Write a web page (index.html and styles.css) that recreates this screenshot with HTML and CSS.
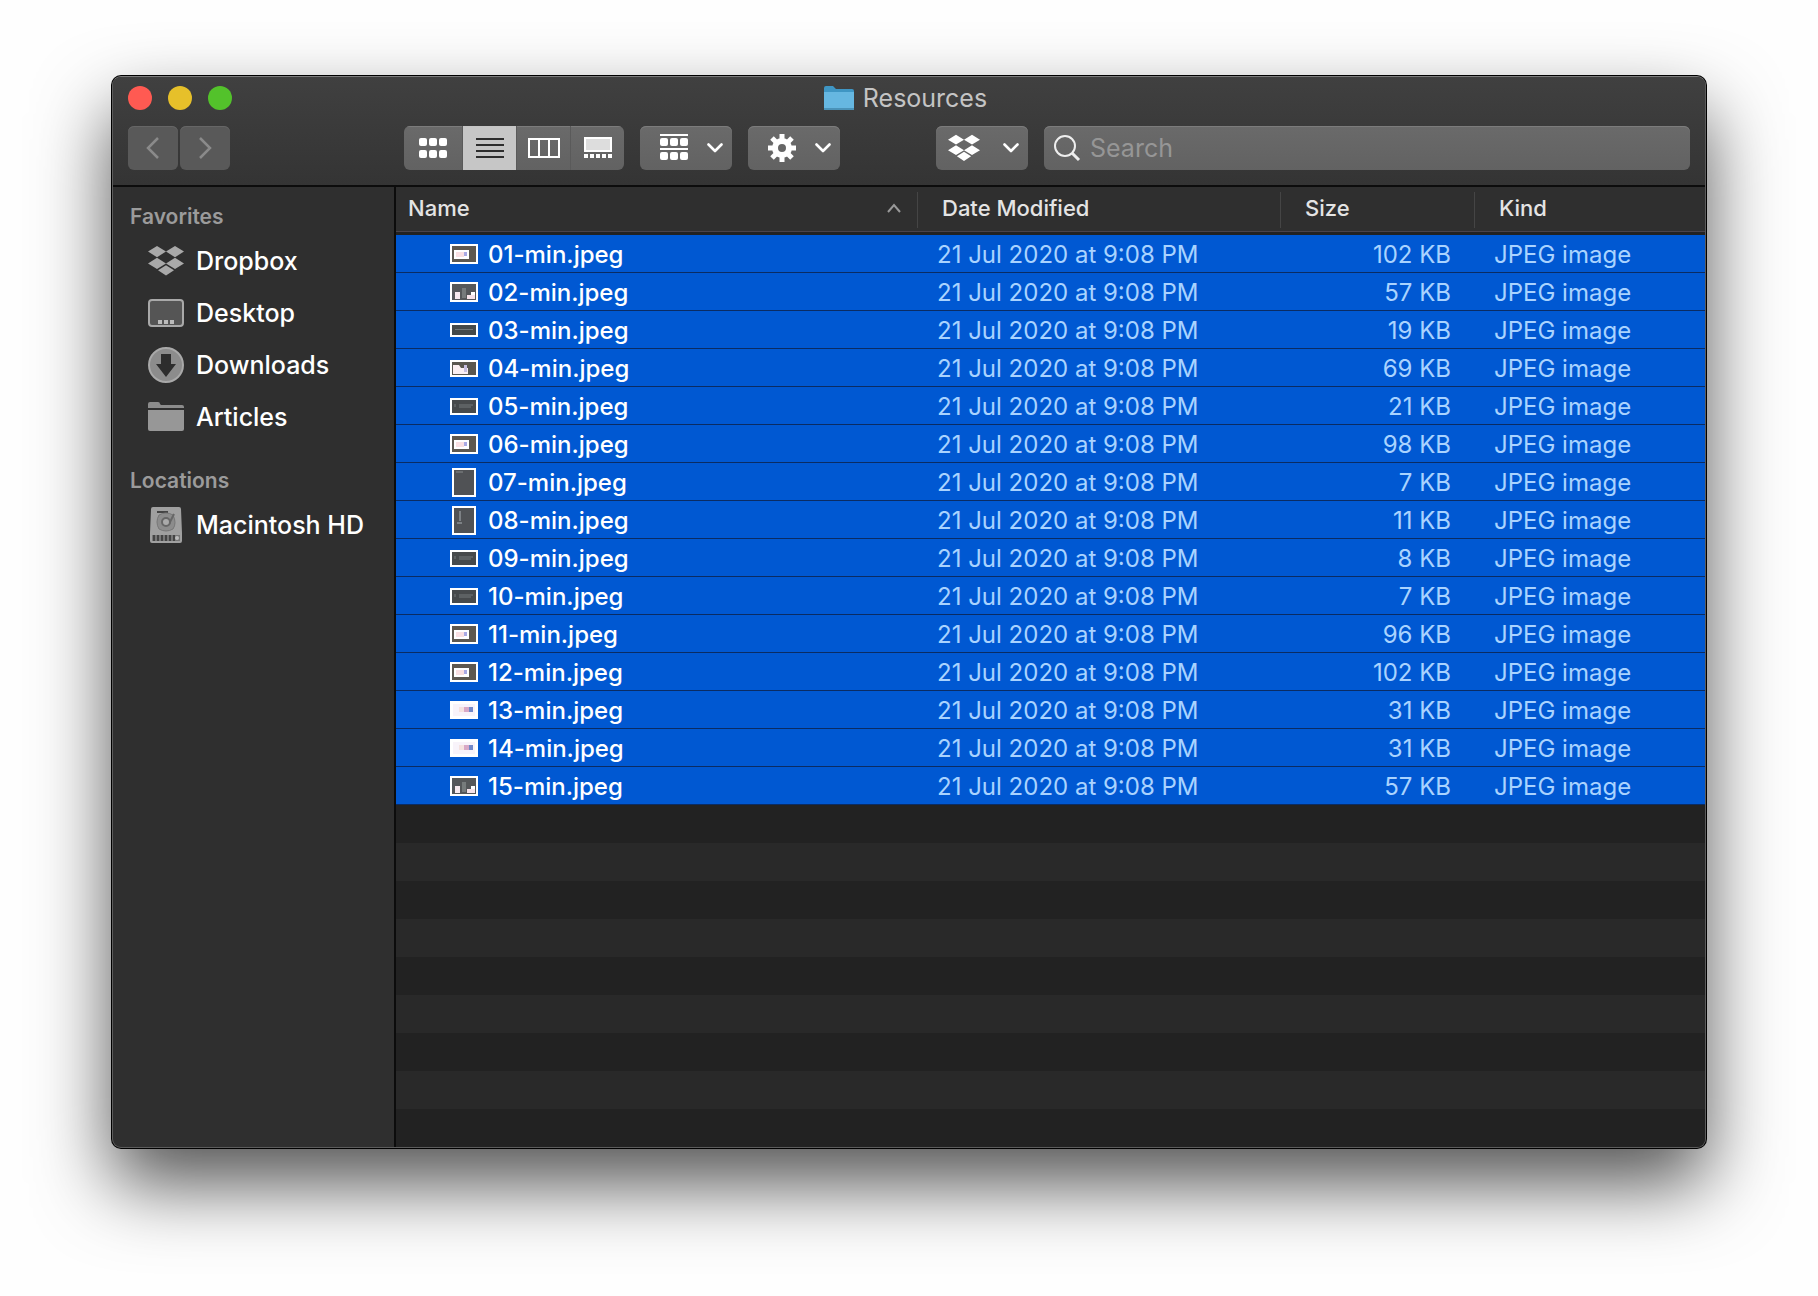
FILE: index.html
```html
<!DOCTYPE html>
<html lang="en">
<head>
    <meta charset="UTF-8">
    <meta name="viewport" content="width=device-width, initial-scale=1.0">
    <title>Resources</title>
    <link rel="stylesheet" href="styles.css">
</head>
<body>
    <!-- shared icons -->
    <svg class="sprite" aria-hidden="true">
        <symbol id="dropbox" viewBox="0 0 36 30">
            <path d="M9 0l9 5.6-9 5.6-9-5.6zM27 0l9 5.6-9 5.6-9-5.6zM9 11.8l9 5.6-9 5.6-9-5.6zM27 11.8l9 5.6-9 5.6-9-5.6zM18 19.2l8 5-8 5.4-8-5.4z"/>
        </symbol>
        <symbol id="chevron" viewBox="0 0 16 10">
            <path d="M1.5 1.5L8 8l6.500-6.500" fill="none" stroke="currentColor" stroke-width="2.600" stroke-linecap="round" stroke-linejoin="round"/>
        </symbol>
        <symbol id="thumb-window" viewBox="0 0 28 20">
            <rect width="28" height="20" fill="#fff"/>
            <rect x="2" y="2" width="24" height="16" fill="#5d5850"/>
            <rect x="4" y="6" width="15" height="9" fill="#fff"/>
            <rect x="6" y="8" width="8" height="5" fill="#f9dfe2"/>
            <rect x="14" y="8" width="3" height="4" fill="#a9a9e4"/>
        </symbol>
        <symbol id="thumb-people" viewBox="0 0 28 20">
            <rect width="28" height="20" fill="#fff"/>
            <rect x="2" y="2" width="24" height="16" fill="#55575a"/>
            <rect x="5" y="10" width="5" height="7" fill="#f7e9ee"/>
            <rect x="17" y="13" width="8" height="4" fill="#f7e3ea"/>
            <rect x="21" y="10" width="4" height="3" fill="#fff"/>
            <rect x="12" y="6" width="4" height="10" fill="#777b7c"/>
        </symbol>
        <symbol id="thumb-bar" viewBox="0 0 28 14">
            <rect width="28" height="14" fill="#fff"/>
            <rect x="2" y="2" width="24" height="10" fill="#44494a"/>
            <rect x="5" y="6" width="18" height="1" fill="#6f7577"/>
        </symbol>
        <symbol id="thumb-photo" viewBox="0 0 28 17">
            <rect width="28" height="17" fill="#fff"/>
            <rect x="2" y="2" width="24" height="13" fill="#5a5750"/>
            <path d="M3 5h6l2 3h7v6H3z" fill="#fbeff2"/>
            <rect x="14" y="5" width="3" height="7" fill="#c8bfe0"/>
        </symbol>
        <symbol id="thumb-dark" viewBox="0 0 28 17">
            <rect width="28" height="17" fill="#fff"/>
            <rect x="2" y="2" width="24" height="13" fill="#474a4c"/>
            <path d="M5 6v3M9 7h14M9 9h12" stroke="#74787a"/>
        </symbol>
        <symbol id="thumb-tall" viewBox="0 0 24 29">
            <rect width="24" height="29" fill="#fff"/>
            <rect x="2" y="2" width="20" height="25" fill="#505255"/>
            <path d="M4 4h7" stroke="#85898b"/>
        </symbol>
        <symbol id="thumb-list" viewBox="0 0 24 29">
            <rect width="24" height="29" fill="#fff"/>
            <rect x="2" y="2" width="20" height="25" fill="#505255"/>
            <path d="M8 5v10M5 17h5" stroke="#a9b0b5"/>
        </symbol>
        <symbol id="thumb-light" viewBox="0 0 28 18">
            <rect width="28" height="18" fill="#fff"/>
            <rect x="3" y="3" width="22" height="12" fill="#f8f3fa"/>
            <rect x="9" y="6" width="6" height="5" fill="#f5e2e0"/>
            <rect x="14" y="6" width="5" height="5" fill="#d8a8c6"/>
            <rect x="19" y="6" width="4" height="5" fill="#7288c8"/>
        </symbol>
    </svg>

    <main class="window">
        <header class="toolbar">
            <div class="titlebar">
                <div class="lights">
                    <button class="light light-close" aria-label="Close"></button>
                    <button class="light light-minimize" aria-label="Minimize"></button>
                    <button class="light light-zoom" aria-label="Zoom"></button>
                </div>
                <h1 class="title">
                    <svg width="32" height="26" viewBox="0 0 32 26">
                        <path d="M1 3q0-2 2-2h7l3 3h16q2 0 2 2v17q0 1-1 1H2q-1 0-1-1z" fill="#3f96c4"/>
                        <path d="M1 7h30v16q0 2-1 2H2q-1 0-1-2z" fill="#66b7e1"/>
                        <path d="M1 24h30" stroke="#4a92b8" stroke-width="2"/>
                    </svg>
                    Resources
                </h1>
            </div>

            <div class="controls">
                <div class="nav">
                    <button class="btn btn-nav" aria-label="Back">
                        <svg width="14" height="24" viewBox="0 0 14 24"><path d="M12 2L2 12l10 10" fill="none" stroke="currentColor" stroke-width="2.500"/></svg>
                    </button>
                    <button class="btn btn-nav" aria-label="Forward">
                        <svg width="14" height="24" viewBox="0 0 14 24"><path d="M2 2l10 10L2 22" fill="none" stroke="currentColor" stroke-width="2.500"/></svg>
                    </button>
                </div>

                <div class="views">
                    <button class="btn view" aria-label="Icons">
                        <svg width="28" height="20" viewBox="0 0 28 20" fill="#fff">
                            <rect width="8" height="8" rx="2"/><rect x="10" width="8" height="8" rx="2"/><rect x="20" width="8" height="8" rx="2"/>
                            <rect y="12" width="8" height="8" rx="2"/><rect x="10" y="12" width="8" height="8" rx="2"/><rect x="20" y="12" width="8" height="8" rx="2"/>
                        </svg>
                    </button>
                    <button class="btn view view-active" aria-label="List">
                        <svg width="30" height="20" viewBox="0 0 30 20"><path d="M1 1h28M1 7h28M1 13h28M1 19h28" stroke="#2d2d2d" stroke-width="2"/></svg>
                    </button>
                    <button class="btn view" aria-label="Columns">
                        <svg width="32" height="20" viewBox="0 0 32 20"><path d="M1 1h30v18H1zM11 1v18M21 1v18" fill="none" stroke="#fff" stroke-width="2"/></svg>
                    </button>
                    <button class="btn view" aria-label="Gallery">
                        <svg width="28" height="22" viewBox="0 0 28 22">
                            <rect x="1" y="1" width="26" height="13" fill="#ddd" stroke="#fff" stroke-width="2"/>
                            <path d="M0 19h28" stroke="#fff" stroke-width="4" stroke-dasharray="4 2"/>
                        </svg>
                    </button>
                </div>

                <button class="btn btn-menu" aria-label="Group items">
                    <svg width="28" height="28" viewBox="0 0 28 28" fill="#fff">
                        <rect width="28" height="2"/><rect y="14" width="28" height="2"/>
                        <rect y="4" width="8" height="8" rx="2"/><rect x="10" y="4" width="8" height="8" rx="2"/><rect x="20" y="4" width="8" height="8" rx="2"/>
                        <rect y="18" width="8" height="8" rx="2"/><rect x="10" y="18" width="8" height="8" rx="2"/><rect x="20" y="18" width="8" height="8" rx="2"/>
                    </svg>
                    <svg width="16" height="10"><use href="#chevron"/></svg>
                </button>
                <button class="btn btn-menu" aria-label="Actions">
                    <svg width="28" height="28" viewBox="-14 -14 28 28">
                        <path d="M0-14V14M-14 0H14M-10-10L10 10M10-10L-10 10" stroke="#fff" stroke-width="5"/>
                        <circle r="7" fill="#666" stroke="#fff" stroke-width="6"/>
                        <circle r="3" fill="#666"/>
                    </svg>
                    <svg width="16" height="10"><use href="#chevron"/></svg>
                </button>
                <button class="btn btn-menu btn-dropbox" aria-label="Dropbox">
                    <svg width="32" height="28" fill="#fff"><use href="#dropbox"/></svg>
                    <svg width="16" height="10"><use href="#chevron"/></svg>
                </button>

                <label class="search">
                    <svg width="28" height="28" viewBox="0 0 28 28"><circle cx="11" cy="12" r="10" fill="none" stroke="#eee" stroke-width="2"/><path d="M18 19l7 7" stroke="#eee" stroke-width="3"/></svg>
                    <input type="text" placeholder="Search" aria-label="Search">
                </label>
            </div>
        </header>

        <div class="content">
            <nav class="sidebar">
                <h2>Favorites</h2>
                <a href="#">
                    <svg width="36" height="30" fill="#a9a9a9"><use href="#dropbox"/></svg>
                    Dropbox
                </a>
                <a href="#">
                    <svg width="36" height="28" viewBox="0 0 36 28">
                        <rect x="1" y="1" width="34" height="26" rx="3" fill="#555" stroke="#a9a9a9" stroke-width="2"/>
                        <path d="M10 23h4M16 23h4M22 23h4" stroke="#bbb" stroke-width="4"/>
                    </svg>
                    Desktop
                </a>
                <a href="#">
                    <svg width="36" height="36" viewBox="0 0 36 36">
                        <circle cx="18" cy="18" r="17" fill="#8c8c8c" stroke="#a9a9a9" stroke-width="2"/>
                        <path d="M13 7h10v10h5L18 30 8 17h5z" fill="#2d2d2d"/>
                    </svg>
                    Downloads
                </a>
                <a href="#">
                    <svg width="36" height="30" viewBox="0 0 36 30">
                        <path d="M0 6V2q0-2 2-2h8q2 0 2 2l1 1h21q2 0 2 2v1z" fill="#8c8c8c"/>
                        <path d="M0 8h36v19q0 2-2 2H2q-2 0-2-2z" fill="#979797"/>
                    </svg>
                    Articles
                </a>
                <h2>Locations</h2>
                <a href="#">
                    <svg width="36" height="36" viewBox="0 0 36 36">
                        <path d="M5 0h26q2 0 2 2l1 24v8q0 2-2 2H4q-2 0-2-2v-8L3 2q0-2 2-2z" fill="#a0a0a0"/>
                        <path d="M9 5h11" stroke="#444" stroke-width="2"/>
                        <path d="M11 8q7-4 14 0 4 8 0 14-7 4-14 0-4-7 0-14z" fill="#8c8c8c" stroke="#777"/>
                        <path d="M26 7L21 17" stroke="#666" stroke-width="2"/>
                        <circle cx="18" cy="15" r="4" fill="#aaa" stroke="#666" stroke-width="2"/>
                        <rect x="4" y="28" width="28" height="6" fill="#777"/>
                        <path d="M6 28v6M10 28v6M14 28v6M18 28v6M22 28v6M26 28v6" stroke="#444" stroke-width="2"/>
                        <circle cx="29" cy="31" r="2" fill="#bbb"/>
                    </svg>
                    Macintosh HD
                </a>
            </nav>

            <div class="list">
                <table>
                    <thead>
                        <tr>
                            <th class="col-name" aria-sort="ascending"><div>Name <svg width="14" height="10" viewBox="0 0 14 10"><path d="M1 9l6-7 6 7" fill="none" stroke="#999" stroke-width="2"/></svg></div></th>
                            <th class="col-date"><div>Date Modified</div></th>
                            <th class="col-size"><div>Size</div></th>
                            <th class="col-kind"><div>Kind</div></th>
                        </tr>
                    </thead>
                    <tbody>
                        <tr><td class="name"><svg width="28" height="20"><use href="#thumb-window"/></svg>01-min.jpeg</td><td class="date">21 Jul 2020 at 9:08 PM</td><td class="size">102 KB</td><td>JPEG image</td></tr>
                        <tr><td class="name"><svg width="28" height="20"><use href="#thumb-people"/></svg>02-min.jpeg</td><td class="date">21 Jul 2020 at 9:08 PM</td><td class="size">57 KB</td><td>JPEG image</td></tr>
                        <tr><td class="name"><svg width="28" height="14"><use href="#thumb-bar"/></svg>03-min.jpeg</td><td class="date">21 Jul 2020 at 9:08 PM</td><td class="size">19 KB</td><td>JPEG image</td></tr>
                        <tr><td class="name"><svg width="28" height="17"><use href="#thumb-photo"/></svg>04-min.jpeg</td><td class="date">21 Jul 2020 at 9:08 PM</td><td class="size">69 KB</td><td>JPEG image</td></tr>
                        <tr><td class="name"><svg width="28" height="17"><use href="#thumb-dark"/></svg>05-min.jpeg</td><td class="date">21 Jul 2020 at 9:08 PM</td><td class="size">21 KB</td><td>JPEG image</td></tr>
                        <tr><td class="name"><svg width="28" height="20"><use href="#thumb-window"/></svg>06-min.jpeg</td><td class="date">21 Jul 2020 at 9:08 PM</td><td class="size">98 KB</td><td>JPEG image</td></tr>
                        <tr><td class="name"><svg width="28" height="29"><use href="#thumb-tall"/></svg>07-min.jpeg</td><td class="date">21 Jul 2020 at 9:08 PM</td><td class="size">7 KB</td><td>JPEG image</td></tr>
                        <tr><td class="name"><svg width="28" height="29"><use href="#thumb-list"/></svg>08-min.jpeg</td><td class="date">21 Jul 2020 at 9:08 PM</td><td class="size">11 KB</td><td>JPEG image</td></tr>
                        <tr><td class="name"><svg width="28" height="17"><use href="#thumb-dark"/></svg>09-min.jpeg</td><td class="date">21 Jul 2020 at 9:08 PM</td><td class="size">8 KB</td><td>JPEG image</td></tr>
                        <tr><td class="name"><svg width="28" height="17"><use href="#thumb-dark"/></svg>10-min.jpeg</td><td class="date">21 Jul 2020 at 9:08 PM</td><td class="size">7 KB</td><td>JPEG image</td></tr>
                        <tr><td class="name"><svg width="28" height="20"><use href="#thumb-window"/></svg>11-min.jpeg</td><td class="date">21 Jul 2020 at 9:08 PM</td><td class="size">96 KB</td><td>JPEG image</td></tr>
                        <tr><td class="name"><svg width="28" height="20"><use href="#thumb-window"/></svg>12-min.jpeg</td><td class="date">21 Jul 2020 at 9:08 PM</td><td class="size">102 KB</td><td>JPEG image</td></tr>
                        <tr><td class="name"><svg width="28" height="18"><use href="#thumb-light"/></svg>13-min.jpeg</td><td class="date">21 Jul 2020 at 9:08 PM</td><td class="size">31 KB</td><td>JPEG image</td></tr>
                        <tr><td class="name"><svg width="28" height="18"><use href="#thumb-light"/></svg>14-min.jpeg</td><td class="date">21 Jul 2020 at 9:08 PM</td><td class="size">31 KB</td><td>JPEG image</td></tr>
                        <tr><td class="name"><svg width="28" height="20"><use href="#thumb-people"/></svg>15-min.jpeg</td><td class="date">21 Jul 2020 at 9:08 PM</td><td class="size">57 KB</td><td>JPEG image</td></tr>
                    </tbody>
                </table>
                <div class="stripes"></div>
            </div>
        </div>
    </main>
</body>
</html>
```
FILE: styles.css
```css
* {
    box-sizing: border-box;
}
body {
    margin: 0;
    min-height: 100vh;
    padding: 76px 112px 148px;
    display: flex;
    background-color: #fefefe;
    font-family: Inter, "Liberation Sans", sans-serif;
    color: #fff;
}
.sprite {
    display: none;
}
.window {
    flex: 1;
    min-width: 0;
    display: flex;
    flex-direction: column;
    border: 1px solid #5c5c5c;
    border-top-color: #7c7c7c;
    border-radius: 9px;
    overflow: hidden;
    background-color: #2f2f2f;
    box-shadow: 0 0 0 1px #000, 0 36px 76px rgba(0,0,0,0.68);
}
button {
    padding: 0;
    border: none;
    font: inherit;
    cursor: pointer;
}

/* toolbar */
.toolbar {
    padding: 0 15px 15px;
    background: linear-gradient(#404040, #343434);
    border-bottom: 2px solid #0c0c0c;
}
.titlebar {
    height: 49px;
    padding-bottom: 7px;
    display: grid;
    grid-template-columns: 1fr auto 1fr;
    align-items: center;
}
.lights {
    display: flex;
    gap: 16px;
}
.light {
    width: 24px;
    height: 24px;
    border-radius: 50%;
}
.light-close {
    background-color: #ff5a52;
}
.light-minimize {
    background-color: #e6c02a;
}
.light-zoom {
    background-color: #53c22b;
}
.title {
    margin: 0;
    padding-right: 8px;
    display: flex;
    align-items: center;
    gap: 8px;
    font-size: 25px;
    font-weight: 400;
    color: #c4c4c4;
}
.controls {
    display: flex;
    gap: 16px;
}
.btn {
    height: 44px;
    display: flex;
    align-items: center;
    justify-content: center;
    border-radius: 6px;
    background: linear-gradient(#6a6a6a, #626262);
    box-shadow: inset 0 1px #7c7c7c;
    color: #fff;
}
.nav {
    width: 260px;
    display: flex;
    gap: 2px;
}
.btn-nav {
    width: 50px;
    background: #595959;
    box-shadow: inset 0 1px #666;
    color: #8a8a8a;
}
.views {
    display: flex;
    border-radius: 6px;
    overflow: hidden;
}
.view {
    width: 54px;
    border-radius: 0;
    border-left: 1px solid #5a5a5a;
}
.view:first-child {
    width: 58px;
    border-left: none;
}
.view-active {
    background: #c6c6c6;
    box-shadow: none;
}
.btn-menu {
    width: 92px;
    padding: 0 9px 0 20px;
    justify-content: space-between;
}
.btn-dropbox {
    margin-left: 80px;
    padding-left: 12px;
}
.search {
    flex: 1;
    min-width: 0;
    height: 44px;
    padding: 0 10px;
    display: flex;
    align-items: center;
    gap: 8px;
    border-radius: 6px;
    background: linear-gradient(#6a6a6a, #626262);
    box-shadow: inset 0 1px #7c7c7c;
}
.search svg {
    flex: none;
}
.search input {
    flex: 1;
    min-width: 0;
    padding: 0;
    border: none;
    outline: none;
    background: none;
    font: inherit;
    font-size: 25px;
    color: #fff;
}
.search input::placeholder {
    color: #969696;
}

/* body of the window */
.content {
    flex: 1;
    display: flex;
}
.sidebar {
    width: 283px;
    flex: none;
    padding-top: 11px;
    border-right: 2px solid #0c0c0c;
}
.sidebar h2 {
    margin: 0;
    padding-left: 17px;
    font-size: 21px;
    line-height: 37px;
    font-weight: 600;
    color: #9b9b9b;
}
.sidebar a {
    height: 52px;
    padding-left: 35px;
    display: flex;
    align-items: center;
    gap: 12px;
    font-size: 25px;
    font-weight: 500;
    color: #fff;
    text-decoration: none;
    white-space: nowrap;
}
.sidebar a + h2 {
    margin-top: 19px;
}
.list {
    flex: 1;
    min-width: 0;
    display: flex;
    flex-direction: column;
}
.stripes {
    flex: 1;
    background: repeating-linear-gradient(#222 0, #222 38px, #292929 38px, #292929 76px);
}
table {
    width: 100%;
    table-layout: fixed;
    border-spacing: 0;
}
th {
    height: 48px;
    padding: 0;
    border-bottom: 3px solid #222;
    box-shadow: inset 0 -1px #4a434a;
    font-size: 22px;
    font-weight: 500;
    text-align: left;
    color: #e4e4e4;
}
th div {
    height: 36px;
    padding: 0 0 4px 24px;
    display: flex;
    align-items: center;
    justify-content: space-between;
    border-right: 1px solid #454545;
}
.col-name div {
    padding: 0 16px 4px 12px;
}
.col-date {
    width: 363px;
}
.col-size {
    width: 194px;
}
.col-kind {
    width: 230px;
}
.col-kind div {
    border-right: none;
}
td {
    height: 38px;
    padding: 3px 0 0 19px;
    border-bottom: 1px solid #0a2c64;
    background-color: #0058d2;
    font-size: 24px;
    line-height: 30px;
    color: #a9d3ff;
    white-space: nowrap;
}
.name {
    padding-left: 54px;
    font-weight: 500;
    color: #fff;
}
.name svg {
    margin: -4px 10px 0 0;
    vertical-align: middle;
}
.size {
    padding-right: 24px;
    padding-left: 0;
    text-align: right;
}
```
